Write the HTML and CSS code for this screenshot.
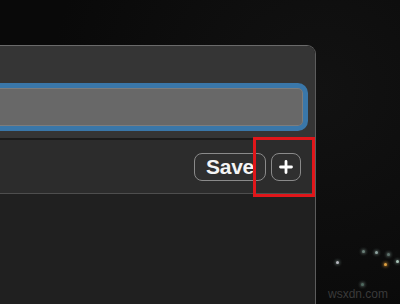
FILE: index.html
```html
<!DOCTYPE html>
<html>
<head>
<meta charset="utf-8">
<link rel="stylesheet" href="styles.css">
</head>
<body>
<div class="desk">
  <div class="window">
    <div class="header">
      <div class="search"></div>
    </div>
    <div class="toolbar">
      <button class="btn save">Save</button>
      <button class="btn plus" aria-label="Add">
        <svg width="14" height="14" viewBox="0 0 14 14"><path d="M7 1.5v11M1.5 7h11" stroke="#fff" stroke-width="2.8" stroke-linecap="round"/></svg>
      </button>
    </div>
    <div class="content"></div>
  </div>
  <div class="highlight"></div>
  <span class="dot d1"></span>
  <span class="dot d2"></span>
  <span class="dot d3"></span>
  <span class="dot d4 amber"></span>
  <span class="dot d5"></span>
  <span class="dot d6"></span>
  <span class="dot d7"></span>
  <div class="watermark">wsxdn.com</div>
</div>
</body>
</html>
```
FILE: styles.css
```css
html, body {
  margin: 0;
  padding: 0;
  background: #0b0b0b;
  overflow: hidden;
}
.desk {
  position: relative;
  width: 400px;
  height: 304px;
  padding-top: 45px;
  box-sizing: border-box;
  background: radial-gradient(circle at 80% 30%, #121212 0%, #090909 70%);
  font-family: "Liberation Sans", Arial, sans-serif;
}
.window {
  width: 316px;
  height: 259px;
  display: flex;
  flex-direction: column;
  border-top: 1px solid #6a6a6a;
  border-right: 1px solid #5c5c5c;
  border-top-right-radius: 9px;
  overflow: hidden;
  box-sizing: border-box;
}
.header {
  height: 94px;
  flex: none;
  background: #353535;
  padding-top: 37px;
  box-sizing: border-box;
  border-bottom: 2px solid #1b1b1b;
}
.search {
  height: 48px;
  margin-left: -12px;
  margin-right: 7px;
  box-sizing: border-box;
  border: 5px solid #3a77a9;
  border-radius: 10px;
  background: #686868;
  box-shadow: inset 0 0 0 1px #7d7d7d;
}
.toolbar {
  height: 54px;
  flex: none;
  background: #2c2c2c;
  border-bottom: 1px solid #4e4e4e;
  display: flex;
  justify-content: flex-end;
  align-items: flex-start;
  gap: 5px;
  padding-top: 13px;
  padding-right: 14px;
  box-sizing: border-box;
}
.btn {
  height: 28px;
  box-sizing: border-box;
  border: 1.5px solid #8a8a8a;
  border-radius: 8px;
  background: #2f2f2f;
  color: #f4f4f4;
  font-family: "Liberation Sans", Arial, sans-serif;
  padding: 0;
  display: flex;
  align-items: center;
  justify-content: center;
}
.save {
  width: 72px;
  font-size: 21px;
  font-weight: 700;
  letter-spacing: -0.3px;
}
.plus {
  width: 30px;
}
.content {
  flex: 1;
  background: #202020;
}
.highlight {
  position: absolute;
  left: 253px;
  top: 137px;
  width: 62px;
  height: 60px;
  box-sizing: border-box;
  border: 3px solid #e0161a;
}
.dot {
  position: absolute;
  width: 3px;
  height: 3px;
  border-radius: 50%;
  background: #8fa3a0;
  box-shadow: 0 0 3px 1px rgba(150, 180, 170, 0.45);
}
.dot.amber {
  background: #e0a040;
  box-shadow: 0 0 3px 1px rgba(230, 160, 60, 0.55);
}
.d1 { left: 336px; top: 261px; background: #b8b8c0; }
.d2 { left: 362px; top: 250px; background: #6a7f78; }
.d3 { left: 375px; top: 251px; }
.d4 { left: 384px; top: 263px; }
.d5 { left: 396px; top: 260px; background: #a9c4b8; }
.d6 { left: 387px; top: 253px; background: #5f726d; }
.d7 { left: 361px; top: 283px; background: #4f6a60; }
.watermark {
  position: absolute;
  left: 328px;
  top: 287px;
  font-size: 12px;
  color: #3a3a3a;
  font-family: "Liberation Sans", Arial, sans-serif;
}
```
